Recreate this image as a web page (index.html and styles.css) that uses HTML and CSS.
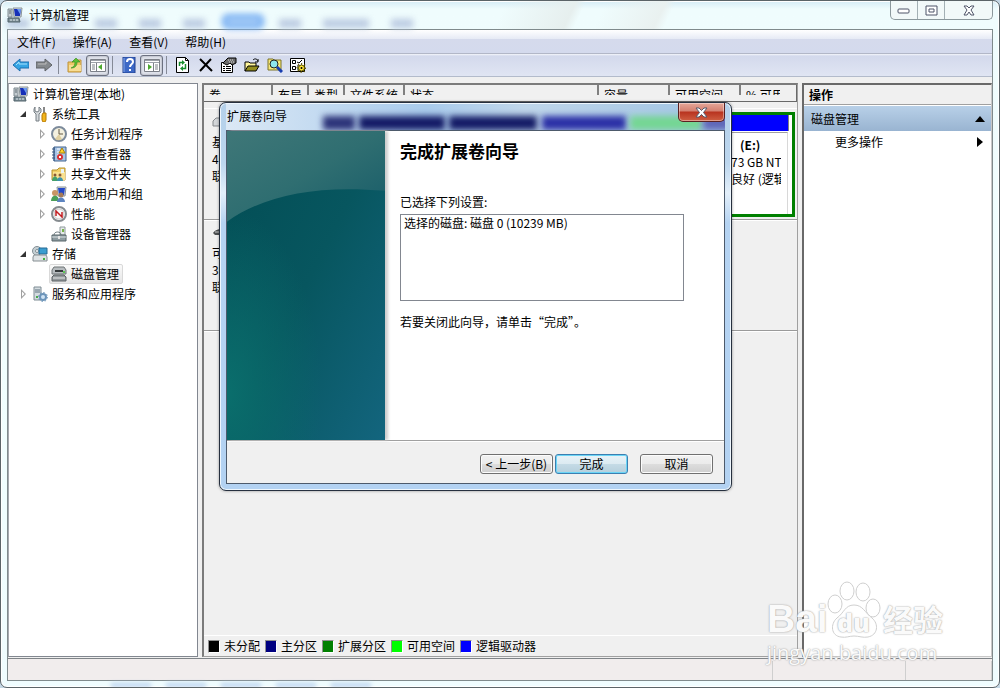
FILE: index.html
```html
<!DOCTYPE html>
<html lang="zh-CN">
<head>
    <meta charset="UTF-8" />
    <meta name="viewport" content="width=device-width, initial-scale=1.0">
    <title>计算机管理</title>
    <link rel="stylesheet" href="styles.css">
</head>
<body>

    <!-- Shared icons -->
    <svg class="defs" aria-hidden="true">
        <symbol id="i-computer" viewBox="0 0 16 16">
            <path d="M6 1h9l-1 9H7z" fill="#d8dde0" stroke="#8b9599" />
            <path d="M7 2h7l-1 7H8z" fill="#1730b8" />
            <path d="M10 2h4l-1 5z" fill="#6c9cf0" />
            <path d="M1 2h4v8H1z" fill="#c6ced2" stroke="#7e8a90" />
            <path d="M2 4h2M2 6h2" stroke="#5e6a70" />
            <path d="M1 11h11l1 4H1z" fill="#7f9098" stroke="#51626a" />
            <path d="M3 13h2M6 13h2M9 13h2" stroke="#dfe8ec" />
        </symbol>
        <symbol id="i-tools" viewBox="0 0 16 16">
            <path d="M3 1v4l2 1 2-1V1l2 2v3L7 8v7H4V8L2 6V3z" fill="#d5d9dc" stroke="#777f84" />
            <path d="M12 1v7" stroke="#888" stroke-width="2" />
            <path d="M11 7h3v7l-1 2h-2l-1-2v-5z" fill="#f3b51b" stroke="#b67a05" />
        </symbol>
        <symbol id="i-clock" viewBox="0 0 16 16">
            <circle cx="8" cy="8" r="7" fill="#f3f0df" stroke="#7d8b9b" stroke-width="2" />
            <path d="M8 8L4 13a6 6 0 0 0 7 0z" fill="#dfcfa0" />
            <path d="M8 3v5h4" fill="none" stroke="#635843" />
        </symbol>
        <symbol id="i-event" viewBox="0 0 16 16">
            <path d="M3 1h12v14H3z" fill="#a7c4e6" stroke="#43658f" />
            <path d="M3 1v14M1 3h3M1 6h3M1 9h3M1 12h3" stroke="#385983" />
            <path d="M6 3h3M6 6h3M6 9h3" stroke="#fff" />
            <path d="M11 2l3 5H8z" fill="#ffd52b" stroke="#aa8108" />
            <circle cx="9" cy="11" r="3" fill="#d93134" />
            <path d="M8 10l2 2M10 10l-2 2" stroke="#fff" />
        </symbol>
        <symbol id="i-share" viewBox="0 0 16 16">
            <path d="M1 4h5l2-2h6v12H1z" fill="#f1cf65" stroke="#b7922e" />
            <path d="M2 6h12v8H2z" fill="#f9e18f" />
            <path d="M10 3h3v4h-3z" fill="#e9f3f5" />
            <circle cx="4" cy="9" r="1.5" fill="#8a5a35" />
            <circle cx="9" cy="9" r="1.5" fill="#8a5a35" />
            <path d="M1 15c0-6 6-6 6 0z" fill="#45a06a" />
            <path d="M6 15c0-5 6-5 6 0z" fill="#3e93ac" />
        </symbol>
        <symbol id="i-users" viewBox="0 0 16 16">
            <path d="M6 1h9l-1 9H7z" fill="#d8dde0" stroke="#8b9599" />
            <path d="M7 2h7l-1 7H8z" fill="#2448c8" />
            <circle cx="4" cy="7" r="3" fill="#c99565" />
            <path d="M0 15c0-7 8-7 8 0z" fill="#4b9f58" />
            <circle cx="10" cy="9" r="2.5" fill="#a57a57" />
            <path d="M6 16c0-6 8-6 8 0z" fill="#5d84c0" />
        </symbol>
        <symbol id="i-perf" viewBox="0 0 16 16">
            <circle cx="8" cy="8" r="7" fill="#fff" stroke="#858b8f" stroke-width="2" />
            <circle cx="8" cy="8" r="5" fill="#f8f8f8" stroke="#c9c9c9" />
            <path d="M5 10V5l6 6V6" fill="none" stroke="#c31f23" stroke-width="1.5" />
        </symbol>
        <symbol id="i-device" viewBox="0 0 16 16">
            <path d="M9 1h5v8H9z" fill="#e5eaea" stroke="#8f9a9c" />
            <path d="M11 3h2v3h-2z" fill="#78b44b" />
            <path d="M3 9c0-4 7-4 7 0" fill="none" stroke="#69777c" />
            <path d="M1 9h14v6H1z" fill="#8e9ca1" stroke="#566468" />
            <path d="M1 11h14" stroke="#d9e0e2" />
            <path d="M7 10h2v3H7z" fill="#e6e6e6" />
        </symbol>
        <symbol id="i-storage" viewBox="0 0 16 16">
            <circle cx="5" cy="5" r="4.5" fill="#c6d0d4" stroke="#838f94" />
            <circle cx="5" cy="5" r="1.5" fill="#fff" stroke="#838f94" />
            <path d="M7 2h8v6H7z" fill="#3b9dd0" stroke="#266a94" />
            <path d="M2 9h12l1 2v4H1v-4z" fill="#dfe3e5" stroke="#868e92" />
            <path d="M11 12h2v2h-2z" fill="#41b33f" />
        </symbol>
        <symbol id="i-disk" viewBox="0 0 16 16">
            <path d="M3 1h10l2 3v4H1V4z" fill="#b7bcbf" stroke="#6e7477" />
            <path d="M4 5h8" stroke="#35393b" stroke-width="2" />
            <path d="M3 9h10l2 2v4H1v-4z" fill="#92989b" stroke="#5c6265" />
            <path d="M2 12h12" stroke="#e8e8e8" />
            <path d="M12 5h2v2h-2z" fill="#5bc653" />
        </symbol>
        <symbol id="i-services" viewBox="0 0 16 16">
            <path d="M2 1h7v13H2z" fill="#d4dce0" stroke="#7e8c94" />
            <path d="M3 4h5M3 6h5" stroke="#5f7380" />
            <path d="M4 11h2" stroke="#48a94c" stroke-width="2" />
            <circle cx="11" cy="11" r="3" fill="#cfe3f4" stroke="#6c94b9" stroke-width="2" />
            <circle cx="11" cy="11" r="4.5" fill="none" stroke="#6c94b9" stroke-dasharray="1.5 2" />
        </symbol>
    </svg>

    <div class="window">
        <header class="titlebar">
            <div class="titlebar-haze">
                <i></i><i></i><i></i><i></i><i></i><i class="tab"></i><i></i><i class="wide"></i><i></i>
            </div>
            <svg class="icon"><use href="#i-computer" /></svg>
            <h1>计算机管理</h1>
            <div class="caption-btns">
                <button aria-label="最小化"><svg width="14" height="8"><rect x="1" y="3" width="11" height="4" rx="1" fill="#fff" stroke="#4f5468" /></svg></button>
                <button aria-label="最大化"><svg width="13" height="11"><path d="M1 1h11v9H1z M4 4h5v3H4z" fill="#fff" stroke="#4f5468" /></svg></button>
                <button class="close" aria-label="关闭"><svg width="12" height="11"><path d="M1 1h3l2 2 2-2h3L8 5l3 5H8L6 7l-2 3H1l3-5z" fill="#fff" stroke="#4f5468" /></svg></button>
            </div>
        </header>

        <div class="client">
            <nav class="menubar">
                <button>文件(F)</button>
                <button>操作(A)</button>
                <button>查看(V)</button>
                <button>帮助(H)</button>
            </nav>

            <div class="toolbar">
                <button aria-label="后退"><svg class="icon" viewBox="0 0 16 16"><path d="M0 8l7-6v3h9v6H7v3z" fill="#35a5e4" stroke="#1d6fae" /><path d="M3 8l3-3v2h8" fill="none" stroke="#a5e0fb" /></svg></button>
                <button aria-label="前进"><svg class="icon" viewBox="0 0 16 16"><path d="M16 8L9 2v3H0v6h9v3z" fill="#85898d" stroke="#5f6367" /><path d="M2 7h8V5" fill="none" stroke="#bbb" /></svg></button>
                <span class="sep"></span>
                <button aria-label="上移一级"><svg class="icon" viewBox="0 0 16 16"><path d="M1 5h5l1-2h7v12H1z" fill="#efc869" stroke="#bd923b" /><path d="M2 8h12v6H2z" fill="#f8dd94" /><path d="M4 11c3-1 4-3 4-6H5l4-4 4 4h-3c0 4-2 6-6 6z" fill="#5fbf35" stroke="#348b1b" stroke-width=".6" /></svg></button>
                <button class="on" aria-label="显示/隐藏控制台树"><svg class="icon" viewBox="0 0 16 16"><path d="M.5 2.5h15v12H.5z" fill="#fff" stroke="#7c8088" /><path d="M1 3.5h14M1 5.5h14" stroke="#9ca0a8" /><path d="M6.5 6v8M2 8h3M2 10h3M2 12h3" stroke="#7c8088" /><path d="M12 7v6L8 10z" fill="#4da82f" /></svg></button>
                <span class="sep"></span>
                <button aria-label="帮助"><svg class="icon" viewBox="0 0 16 16"><path d="M2 0h12v16H2z" fill="#3d68c6" stroke="#234391" /><path d="M3 1v14" stroke="#86a8e8" /><path d="M6 5c0-4 6-4 6 0 0 2-3 2-3 5" fill="none" stroke="#fff" stroke-width="2" /><path d="M8 12h2v2H8z" fill="#fff" /></svg></button>
                <button class="on" aria-label="显示/隐藏操作窗格"><svg class="icon" viewBox="0 0 16 16"><path d="M.5 2.5h15v12H.5z" fill="#fff" stroke="#7c8088" /><path d="M1 3.5h14M1 5.5h14" stroke="#9ca0a8" /><path d="M9.5 6v8M11 8h3M11 10h3M11 12h3" stroke="#7c8088" /><path d="M4 7v6l4-3z" fill="#4da82f" /></svg></button>
                <span class="sep"></span>
                <button aria-label="刷新"><svg class="icon" viewBox="0 0 16 16"><path d="M1.5 .5h9l3 3v12h-12z" fill="#fff" stroke="#000" /><path d="M10.500 .5v3h3" fill="none" stroke="#000" /><path d="M4.500 9V5.500H8M10.500 7v4.500H7" fill="none" stroke="#178d2d" stroke-width="1.5" /><path d="M7 3l3 2.500L7 8zM8 9l-3 2.500L8 14z" fill="#178d2d" /></svg></button>
                <button aria-label="删除"><svg class="icon" viewBox="0 0 16 16"><path d="M2 2l12 12M13 2L2 14" stroke="#000" stroke-width="2" /></svg></button>
                <button aria-label="属性"><svg class="icon" viewBox="0 0 16 16"><path d="M.5 5.5h11v10H.5z" fill="#fff" stroke="#000" /><path d="M2 9.500h2M5 9.500h5M2 11.500h2M5 11.500h5M2 13.500h2M5 13.500h5" stroke="#000" /><path d="M2 6l5-5h8v5l-4 2-2-2-3 2z" fill="#6c6c6c" stroke="#000" /><path d="M7 3h5M8 5h5" stroke="#ddd" stroke-dasharray="1 1" /></svg></button>
                <button aria-label="打开"><svg class="icon" viewBox="0 0 16 16"><path d="M1 14V5h4l1 1h6v3" fill="#fff59a" stroke="#000" /><path d="M1 14l3-5h11l-3 5z" fill="#938d1c" stroke="#000" /><path d="M9 3c2-2 4-1 5 1M14 2v3h-3" fill="none" stroke="#000" /></svg></button>
                <button aria-label="查找"><svg class="icon" viewBox="0 0 16 16"><path d="M1 2h5l1 1h7v10H1z" fill="#f7e779" stroke="#7c7427" /><circle cx="7" cy="7" r="4" fill="#8de5ee" stroke="#222" /><path d="M10 10l5 5" stroke="#173db0" stroke-width="3" /></svg></button>
                <button aria-label="设置"><svg class="icon" viewBox="0 0 16 16"><path d="M.5 1.5h14v13H.5z" fill="#fff" stroke="#000" /><path d="M2.5 3.5h3v3h-3zM2.5 9.5h3v3h-3z" fill="none" stroke="#000" /><path d="M7 5l2 1 3-3M7 9h3M7 12h2" fill="none" stroke="#000" /><circle cx="11.5" cy="11" r="4" fill="none" stroke="#5c5300" stroke-width="2" stroke-dasharray="1 2" /><circle cx="11.5" cy="11" r="3" fill="#ffe53a" stroke="#5c5300" /><circle cx="11.5" cy="11" r="1" fill="#000" /></svg></button>
            </div>

            <main class="panes">
                <aside class="tree">
                    <ul>
                        <li class="root"><svg class="icon"><use href="#i-computer" /></svg><span>计算机管理(本地)</span></li>
                        <li class="l1"><b class="arrow open"></b><svg class="icon"><use href="#i-tools" /></svg><span>系统工具</span></li>
                        <li class="l2"><b class="arrow"></b><svg class="icon"><use href="#i-clock" /></svg><span>任务计划程序</span></li>
                        <li class="l2"><b class="arrow"></b><svg class="icon"><use href="#i-event" /></svg><span>事件查看器</span></li>
                        <li class="l2"><b class="arrow"></b><svg class="icon"><use href="#i-share" /></svg><span>共享文件夹</span></li>
                        <li class="l2"><b class="arrow"></b><svg class="icon"><use href="#i-users" /></svg><span>本地用户和组</span></li>
                        <li class="l2"><b class="arrow"></b><svg class="icon"><use href="#i-perf" /></svg><span>性能</span></li>
                        <li class="l2"><b class="arrow none"></b><svg class="icon"><use href="#i-device" /></svg><span>设备管理器</span></li>
                        <li class="l1"><b class="arrow open"></b><svg class="icon"><use href="#i-storage" /></svg><span>存储</span></li>
                        <li class="l2"><b class="arrow none"></b><div class="selected"><svg class="icon"><use href="#i-disk" /></svg><span>磁盘管理</span></div></li>
                        <li class="l1"><b class="arrow"></b><svg class="icon"><use href="#i-services" /></svg><span>服务和应用程序</span></li>
                    </ul>
                </aside>

                <section class="content">
                    <div class="volume-list">
                        <table>
                            <thead>
                                <tr><th>卷</th><th>布局</th><th>类型</th><th>文件系统</th><th>状态</th><th>容量</th><th>可用空间</th><th><div>% 可用</div></th></tr>
                            </thead>
                        </table>
                    </div>
                    <div class="disks">
                        <div class="disk">
                            <div class="disk-label">
                                <svg width="18" height="18" viewBox="0 0 18 18"><path d="M1 8l3-3h13v8H1z" fill="#d3d6d9" stroke="#85898d" /></svg>
                                <p>基本</p><p>40</p><p>联机</p>
                            </div>
                            <div class="volume">
                                <div class="volume-bar"></div>
                                <div class="volume-info"><strong>(E:)</strong><p>73 GB NTFS</p><p>良好 (逻辑)</p></div>
                            </div>
                        </div>
                        <div class="disk">
                            <div class="disk-label">
                                <svg width="18" height="18" viewBox="0 0 18 18"><path d="M1 9c3-5 9-4 16-4v6H3z" fill="#4b4e50" /><path d="M3 8h8" stroke="#ccc" /></svg>
                                <p>可移动</p><p>30</p><p>联机</p>
                            </div>
                        </div>
                    </div>
                    <div class="legend">
                        <span><i class="unallocated"></i>未分配</span>
                        <span><i class="primary"></i>主分区</span>
                        <span><i class="extended"></i>扩展分区</span>
                        <span><i class="free"></i>可用空间</span>
                        <span><i class="logical"></i>逻辑驱动器</span>
                    </div>
                </section>

                <aside class="actions">
                    <h2>操作</h2>
                    <button class="actions-group">磁盘管理<svg width="10" height="6"><path d="M5 0l5 6H0z" /></svg></button>
                    <button class="actions-item">更多操作<svg width="6" height="10"><path d="M0 0l6 5-6 5z" /></svg></button>
                </aside>
            </main>

            <footer class="statusbar"><span></span><span></span><span></span></footer>
        </div>

        <div class="frame-haze"></div>

        <!-- Extend volume wizard -->
        <div class="dialog" role="dialog" aria-labelledby="dlgTitle">
            <div class="dialog-title">
                <div class="dialog-haze"><i class="h1"></i><i class="h2"></i><i class="h3"></i><i class="h4"></i><i class="h5"></i><i class="h6"></i></div>
                <span id="dlgTitle">扩展卷向导</span>
                <button class="dialog-close" aria-label="关闭"><svg width="13" height="11"><path d="M1 1h3l2.500 2.500L9 1h3L8.500 5.500 12 10H9L6.500 7.500 4 10H1l3.500-4.500z" fill="#fff" stroke="#555b6c" /></svg></button>
            </div>
            <div class="dialog-body">
                <div class="wizard">
                    <svg class="banner" viewBox="0 0 158 310" preserveAspectRatio="none">
                        <defs>
                            <linearGradient id="gBase" x1="0" y1="0" x2="1" y2="1">
                                <stop offset="0" stop-color="#024d54" />
                                <stop offset=".5" stop-color="#07565f" />
                                <stop offset="1" stop-color="#13657e" />
                            </linearGradient>
                            <radialGradient id="gGlow" cx="0" cy=".85" r=".6">
                                <stop offset="0" stop-color="#0a6e6c" />
                                <stop offset="1" stop-color="#0a6e6c" stop-opacity="0" />
                            </radialGradient>
                            <linearGradient id="gTop" x1="0" y1="0" x2="1" y2="1">
                                <stop offset="0" stop-color="#3f7778" />
                                <stop offset=".5" stop-color="#2f6e71" />
                                <stop offset="1" stop-color="#165b68" />
                            </linearGradient>
                        </defs>
                        <path d="M0 0h158v310H0z" fill="url(#gBase)" />
                        <path d="M0 0h158v310H0z" fill="url(#gGlow)" />
                        <path d="M0 0h158v60C90 54 38 64 0 91z" fill="url(#gTop)" />
                    </svg>
                    <div class="wizard-page">
                        <h2>完成扩展卷向导</h2>
                        <label for="settings">已选择下列设置:</label>
                        <textarea id="settings" readonly>选择的磁盘: 磁盘 0 (10239 MB)</textarea>
                        <p>若要关闭此向导，请单击“完成”。</p>
                    </div>
                </div>
                <div class="wizard-btns">
                    <button>&lt; 上一步(B)</button>
                    <button class="default">完成</button>
                    <button class="cancel">取消</button>
                </div>
            </div>
        </div>

        <div class="watermark">
            <div class="wm-logo">
                <span class="wm-bai">Bai</span>
                <span class="wm-paw">
                    <svg width="54" height="58" viewBox="0 0 54 58">
                        <ellipse cx="8" cy="23" rx="7" ry="9" /><ellipse cx="20" cy="10" rx="7" ry="9" /><ellipse cx="36" cy="11" rx="7" ry="9" /><ellipse cx="46" cy="27" rx="7" ry="9" />
                        <path d="M27 24c-9 0-10 8-17 13-7 6-6 18 4 19 5 1 8-1 13-1s9 2 14 1c10-2 11-13 4-19-7-5-9-13-18-13z" />
                    </svg>
                    <b>du</b>
                </span>
                <span class="wm-cn">经验</span>
            </div>
            <div class="wm-url">jingyan.baidu.com</div>
        </div>
    </div>

</body>
</html>
```
FILE: styles.css
```css
* {
    box-sizing: border-box;
}

body {
    margin: 0;
    background: #c3d6e4;
    font-family: "Noto Sans CJK SC", "Noto Sans", sans-serif;
    font-size: 12px;
    line-height: 16px;
    color: #000;
}

h1, h2, p, ul {
    margin: 0;
    padding: 0;
    font-size: 12px;
}

button {
    margin: 0;
    padding: 0;
    border: none;
    background: none;
    font: inherit;
    color: inherit;
}

.defs {
    position: absolute;
    width: 0;
    height: 0;
}

.icon {
    width: 16px;
    height: 16px;
    flex: none;
}

.window {
    position: relative;
    display: flex;
    flex-direction: column;
    min-height: 100vh;
    padding: 0 6px 6px;
    border: 1px solid #5b6468;
    border-radius: 7px;
    background: linear-gradient(#d5ecf6, #effcfd 8px, #f1fefe 50%, #effcfe);
    box-shadow: inset 0 0 0 1px #fff;
    overflow: hidden;
}

/* --- Title bar --- */
.titlebar {
    position: relative;
    display: flex;
    align-items: center;
    gap: 6px;
    height: 28px;
    flex: none;
    background: linear-gradient(115deg, transparent 50%, #e6efee 57%, transparent 58%, transparent 60%, #e9f1f0 66%, transparent 67%);
}

.titlebar h1 {
    font-weight: normal;
}

.titlebar > .icon,
.titlebar h1,
.caption-btns {
    position: relative;
}

.titlebar-haze {
    position: absolute;
    top: 18px;
    left: 0;
    display: flex;
    gap: 22px;
    filter: blur(3px);
}

.titlebar-haze i {
    width: 22px;
    height: 9px;
    background: #bccbe2;
}

.titlebar-haze .tab {
    width: 42px;
    height: 15px;
    margin: -5px -7px 0 -5px;
    border: 4px solid #6ba7f2;
    border-radius: 6px;
    background: #a9cef6;
}

.titlebar-haze .wide {
    width: 46px;
}

.caption-btns {
    display: flex;
    align-self: flex-start;
    margin-left: auto;
    height: 19px;
    border: 1px solid #8b989c;
    border-top: none;
    border-radius: 0 0 5px 5px;
    background: #f2f9f9;
}

.caption-btns button {
    display: flex;
    align-items: center;
    justify-content: center;
    width: 27px;
    border-right: 1px solid #a3b0b4;
}

.caption-btns .close {
    width: 47px;
    border-right: none;
}

.client {
    display: flex;
    flex-direction: column;
    flex: 1;
    border: 1px solid #7f8a8c;
    background: #f0f0f0;
}

/* --- Menu and toolbar --- */
.menubar {
    display: flex;
    gap: 17px;
    height: 24px;
    padding-left: 9px;
    background: linear-gradient(#fff, #e6eaf5 9px, #d5daec 9px, #d4daed);
    border-bottom: 1px solid #b2b7c7;
}

.toolbar {
    display: flex;
    align-items: center;
    height: 23px;
    padding-left: 1px;
    background: linear-gradient(#f5f7fb, #d3d9ec 2px, #e0e5f3);
    border-bottom: 1px solid #b3bbcb;
}

.toolbar button {
    display: flex;
    align-items: center;
    justify-content: center;
    width: 23px;
    height: 21px;
}

.toolbar .on {
    border: 1px solid #6c7180;
    border-radius: 3px;
    background: #dfe2ea;
    box-shadow: inset 0 0 2px #8a8f9c;
}

.toolbar .sep {
    width: 8px;
    height: 18px;
    background: linear-gradient(#858a97, #858a97) 3px 0 / 1px 100% no-repeat;
}

/* --- Panes --- */
.panes {
    display: flex;
    gap: 4px;
    flex: 1;
    padding-top: 6px;
}

.tree {
    width: 190px;
    border: 1px solid #828790;
    border-left-color: #a6a9b0;
    background: #fff;
}

.tree ul {
    list-style: none;
}

.tree li {
    display: flex;
    align-items: center;
    gap: 4px;
    height: 20px;
}

.tree .root {
    padding-left: 4px;
}

.tree .l1 {
    padding-left: 9px;
}

.tree .l2 {
    padding-left: 28px;
}

.arrow {
    width: 10px;
    height: 10px;
    background: #a0a0a0;
    clip-path: polygon(30% 0, 80% 50%, 30% 100%, 30% 80%, 40% 75%, 65% 50%, 40% 25%, 40% 75%, 30% 80%);
}

.arrow.open {
    background: #333;
    clip-path: polygon(80% 20%, 80% 80%, 20% 80%);
}

.arrow.none {
    background: none;
}

.selected {
    display: flex;
    align-items: center;
    gap: 4px;
    height: 20px;
    margin-left: -2px;
    padding: 0 3px 0 1px;
    border: 1px solid #d9d9d9;
    border-radius: 2px;
    background: linear-gradient(#fafafa, #e6e6e6);
}

.content {
    display: flex;
    flex-direction: column;
    flex: 1;
    min-width: 0;
    border: 1px solid #a0a0a0;
    border-top: 2px solid #7b7b7b;
    border-left: 2px solid #7b7b7b;
}

.volume-list {
    height: 17px;
    border-bottom: 1px solid #696969;
    border-right: 1px solid #696969;
}

.volume-list table {
    display: block;
    width: 100%;
    height: 10px;
    overflow: hidden;
    border-collapse: collapse;
}

.volume-list thead,
.volume-list tr {
    display: flex;
    width: 100%;
}

.volume-list th {
    width: 36px;
    height: 24px;
    padding: 2px 0 0 5px;
    border-right: 2px solid #808080;
    font-weight: normal;
    text-align: left;
    white-space: nowrap;
}

.volume-list th:nth-child(1) {
    width: 69px;
}

.volume-list th:nth-child(4) {
    width: 60px;
}

.volume-list th:nth-child(5) {
    flex: 1;
}

.volume-list th:nth-child(6),
.volume-list th:nth-child(7) {
    width: 71px;
}

.volume-list th:nth-child(8) {
    width: 55px;
    border-right: none;
}

.volume-list th div {
    width: 34px;
    overflow: hidden;
}

.disks {
    flex: 1;
    margin-top: 6px;
    border-top: 1px solid #fff;
}

.disk {
    display: flex;
    justify-content: space-between;
    height: 111px;
    padding: 3px 2px 2px 0;
    border-bottom: 1px solid #9a9a9a;
    box-shadow: 0 1px #fff;
}

.disk-label {
    width: 100px;
    padding-left: 8px;
    line-height: 17px;
}

.disk-label svg {
    display: block;
    margin: 1px 0 2px;
}

.volume {
    width: 76px;
    height: 105px;
    border: 3px solid #008000;
    background: #fff;
}

.volume-bar {
    height: 16px;
    margin-right: 3px;
    background: #0000ff;
    border-right: 1px solid #808080;
}

.volume-info {
    height: 82px;
    margin: 1px 4px 0 0;
    padding: 3px 6px 0 9px;
    border-top: 1px solid #a0a0a0;
    border-right: 1px solid #d8d8d8;
    line-height: 17px;
    white-space: nowrap;
    overflow: hidden;
}

.volume-info strong {
    margin-left: 9px;
}

.volume-info p {
    overflow: hidden;
}

.legend {
    display: flex;
    gap: 5px;
    height: 21px;
    padding: 2px 4px;
    border-top: 1px solid #fff;
}

.legend span {
    display: flex;
    align-items: center;
    gap: 4px;
}

.legend i {
    width: 12px;
    height: 13px;
    border: 1px solid #909090;
    border-right-color: #fff;
    border-bottom-color: #fff;
}

.legend .unallocated { background: #000; }
.legend .primary { background: #000080; }
.legend .extended { background: #008000; }
.legend .free { background: #00ff00; }
.legend .logical { background: #0000ff; }

.actions {
    display: flex;
    flex-direction: column;
    width: 190px;
    border: 1px solid #c8c8c8;
    border-top: 2px solid #696969;
    border-left: 2px solid #696969;
    background: #fff;
}

.actions h2 {
    height: 20px;
    padding: 2px 5px;
    border-bottom: 1px solid #a0a0a0;
    background: #f0f0f0;
}

.actions button {
    display: flex;
    align-items: center;
    justify-content: space-between;
    height: 22px;
    padding: 0 8px 0 31px;
}

.actions .actions-group {
    height: 25px;
    margin-top: 1px;
    padding: 0 6px 0 7px;
    background: linear-gradient(#b8d0e8, #99b4d1);
}

.statusbar {
    display: grid;
    grid-template-columns: 1fr 133px 86px;
    height: 22px;
    margin-top: 1px;
    border-top: 1px solid #7f8488;
    background: #f1eded;
}

.statusbar span {
    margin-top: 2px;
    border-right: 1px solid #cfcfcf;
}

.frame-haze {
    position: absolute;
    bottom: 0;
    left: 110px;
    width: 260px;
    height: 4px;
    background: repeating-linear-gradient(90deg, #b9d2ee 0 40px, transparent 40px 55px);
    filter: blur(2px);
}

/* --- Wizard dialog --- */
.dialog {
    position: absolute;
    top: 101px;
    left: 218px;
    width: 513px;
    padding: 0 6px 6px;
    border: 1px solid #26303f;
    border-radius: 7px;
    background: linear-gradient(#b4d0ea, #bcd6ee 60px, #e3effa 90px, #b5d3f2 120px, #b3d2f2);
    box-shadow: inset 0 0 0 1px #eef6fd, 0 0 3px rgba(0, 0, 0, 0.4);
}

.dialog-title {
    position: relative;
    display: flex;
    align-items: center;
    justify-content: space-between;
    height: 27px;
}

.dialog-title span {
    position: relative;
    padding: 0 0 2px 1px;
}

.dialog-haze {
    position: absolute;
    inset: 1px 0 0;
    overflow: hidden;
    background: linear-gradient(90deg, #dbe8f5, #a9cbec 40%, #bfd6ea 60%, #9fc3e3);
}

.dialog-haze i {
    position: absolute;
    top: 12px;
    height: 14px;
    filter: blur(3px);
    background: #141b66;
}

.dialog-haze .h1 { left: 97px; width: 32px; background: #2c3379; }
.dialog-haze .h2 { left: 133px; width: 86px; }
.dialog-haze .h3 { left: 223px; width: 88px; }
.dialog-haze .h4 { left: 316px; width: 84px; background: #2b30a6; }
.dialog-haze .h5 { left: 404px; width: 72px; background: #74d693; }
.dialog-haze .h6 { left: 477px; width: 28px; background: #6067b8; }

.dialog-title .dialog-close {
    position: relative;
    display: flex;
    align-items: center;
    justify-content: center;
    align-self: flex-start;
    width: 47px;
    height: 19px;
    border: 1px solid #5b2020;
    border-top: none;
    border-radius: 0 0 5px 5px;
    background: linear-gradient(#e6a799, #d48070 8px, #b8331f 9px, #cf5f42);
    box-shadow: inset 0 0 0 1px rgba(255, 255, 255, 0.4);
}

.dialog-body {
    border: 1px solid #4d5a6b;
    background: #f0f0f0;
}

.wizard {
    display: flex;
    height: 310px;
    background: #fff;
    border-bottom: 1px solid #a0a0a0;
}

.banner {
    width: 158px;
    height: 100%;
    flex: none;
    box-shadow: 3px 0 3px #ccc;
}

.wizard-page {
    flex: 1;
    padding: 9px 40px 0 15px;
}

.wizard-page h2 {
    margin-bottom: 32px;
    font-size: 17px;
    line-height: 22px;
}

.wizard-page label {
    display: block;
}

.wizard-page textarea {
    display: block;
    width: 100%;
    height: 87px;
    margin: 4px 0 13px;
    padding: 0 3px;
    border: 1px solid #828790;
    font: inherit;
    line-height: 15px;
    resize: none;
    outline: none;
}

.wizard-btns {
    display: flex;
    justify-content: flex-end;
    gap: 2px;
    padding: 12px 11px 9px;
    border-top: 1px solid #fff;
}

.wizard-btns button {
    width: 73px;
    height: 20px;
    border: 1px solid #707070;
    border-radius: 3px;
    background: linear-gradient(#f2f2f2, #ebebeb 50%, #dddddd 50%, #cfcfcf);
    box-shadow: inset 0 0 0 1px #fcfcfc;
    line-height: 16px;
    white-space: nowrap;
}

.wizard-btns .default {
    border-color: #3c7fb1;
    background: linear-gradient(#e8f3f8, #dceaf1 50%, #c5dbe6 50%, #b5cfdc);
    box-shadow: inset 0 0 0 1px #6bd5f6;
}

.wizard-btns .cancel {
    margin-left: 10px;
}

/* --- Watermark --- */
.watermark {
    position: absolute;
    right: 52px;
    bottom: 22px;
    width: 180px;
    font-family: "Open Sans", "Noto Sans CJK SC", sans-serif;
    color: #fafafa;
    text-shadow: 0 0 2px #a8a8a8, 0 0 1px #b8b8b8;
    pointer-events: none;
}

.wm-logo {
    display: flex;
    align-items: flex-end;
    gap: 2px;
    font-weight: bold;
}

.wm-bai {
    width: 58px;
    font-family: "Liberation Sans", sans-serif;
    font-size: 39px;
    line-height: 40px;
}

.wm-paw {
    position: relative;
    width: 54px;
    height: 58px;
}

.wm-paw svg {
    fill: rgba(255, 255, 255, 0.8);
    stroke: #cfcfcf;
}

.wm-paw b {
    position: absolute;
    left: 10px;
    bottom: 4px;
    font-size: 25px;
    line-height: 26px;
}

.wm-cn {
    font-size: 30px;
    line-height: 38px;
    white-space: nowrap;
}

.wm-url {
    margin-top: 2px;
    font-size: 20px;
    line-height: 24px;
}
```
